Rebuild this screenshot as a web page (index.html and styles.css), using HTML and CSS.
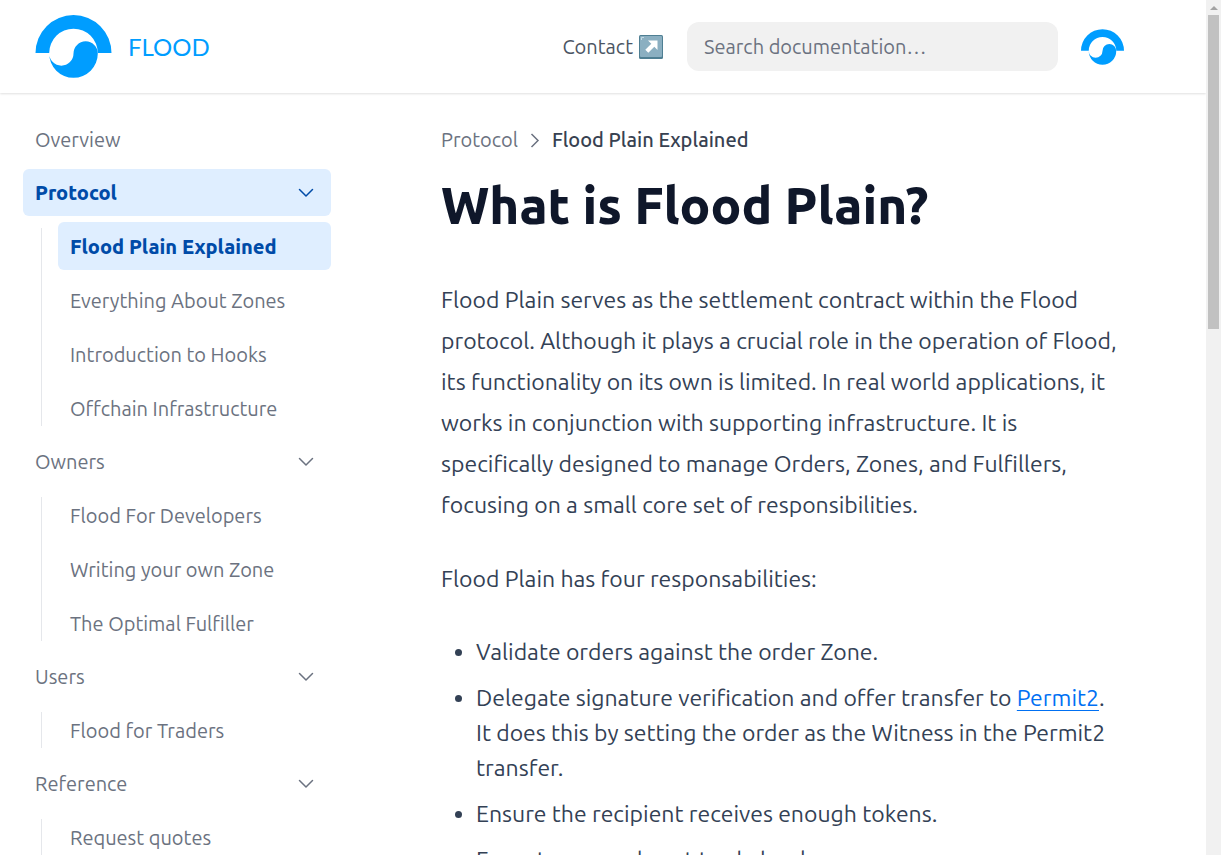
FILE: index.html
```html
<!DOCTYPE html>
<html lang="en">
<head>
<meta charset="utf-8">
<meta name="viewport" content="width=device-width, initial-scale=1">
<title>What is Flood Plain?</title>
<link rel="stylesheet" href="styles.css">
</head>
<body>
<svg class="defs" aria-hidden="true">
  <symbol id="logo" viewBox="0 0 76 63">
    <path d="M0 38A38 38 0 0 1 76 38H62.300A24.300 24.300 0 0 0 13.700 38Z"/>
    <path d="M13.700 38.500A12.150 12.150 0 0 0 38 38.500A12.150 12.150 0 0 1 62.300 38.500A24.300 24.300 0 0 1 13.700 38.500Z"/>
  </symbol>
  <symbol id="chevron" viewBox="0 0 16 16"><path d="M1.500 4.500 8 11 14.500 4.500" fill="none" stroke="currentColor" stroke-width="1.500" stroke-linecap="round" stroke-linejoin="round"/></symbol>
</svg>
<div class="page">
  <header class="topbar">
    <a class="brand" href="#"><svg class="brand-mark" aria-hidden="true"><use href="#logo"/></svg><span>FLOOD</span></a>
    <a class="contact" href="#">Contact
      <svg class="arrow-box" viewBox="0 0 24 24" role="img" aria-label="opens in new tab">
        <rect width="24" height="24" rx="1.500" fill="#4f7f93"/><rect x="1" y="1" width="22" height="21" rx="1" fill="#8bafc1"/>
        <path d="M2.500 5V2.500H5" fill="none" stroke="#c3dbe5"/>
        <path d="M9 5.500h9.500V15l-3.200-3.200-6 6-3-3 6-6Z" fill="#fff"/>
      </svg>
    </a>
    <input class="search" type="search" placeholder="Search documentation…" aria-label="Search documentation">
    <a class="project" href="#" aria-label="Flood project"><svg class="project-mark" aria-hidden="true"><use href="#logo"/></svg></a>
  </header>
  <div class="columns">
    <nav class="sidebar" aria-label="Documentation">
      <a class="item" href="#">Overview</a>
      <section class="group">
        <button class="item active" type="button">Protocol <svg class="chevron" aria-hidden="true"><use href="#chevron"/></svg></button>
        <ul class="children">
          <li><a class="child active" href="#">Flood Plain Explained</a></li>
          <li><a class="child" href="#">Everything About Zones</a></li>
          <li><a class="child" href="#">Introduction to Hooks</a></li>
          <li><a class="child" href="#">Offchain Infrastructure</a></li>
        </ul>
      </section>
      <section class="group">
        <button class="item" type="button">Owners <svg class="chevron" aria-hidden="true"><use href="#chevron"/></svg></button>
        <ul class="children">
          <li><a class="child" href="#">Flood For Developers</a></li>
          <li><a class="child" href="#">Writing your own Zone</a></li>
          <li><a class="child" href="#">The Optimal Fulfiller</a></li>
        </ul>
      </section>
      <section class="group">
        <button class="item" type="button">Users <svg class="chevron" aria-hidden="true"><use href="#chevron"/></svg></button>
        <ul class="children">
          <li><a class="child" href="#">Flood for Traders</a></li>
        </ul>
      </section>
      <section class="group">
        <button class="item" type="button">Reference <svg class="chevron" aria-hidden="true"><use href="#chevron"/></svg></button>
        <ul class="children">
          <li><a class="child" href="#">Request quotes</a></li>
        </ul>
      </section>
    </nav>
    <main class="article">
      <nav class="crumbs" aria-label="Breadcrumb">
        <span>Protocol</span>
        <svg class="crumb-arrow" viewBox="0 0 10 16" aria-hidden="true"><path d="M1.500 2 8 8.500 1.500 15" fill="none" stroke="currentColor" stroke-width="1.500"/></svg>
        <span class="current">Flood Plain Explained</span>
      </nav>
      <h1>What is Flood Plain?</h1>
      <p>Flood Plain serves as the settlement contract within the Flood<br> protocol. Although it plays a crucial role in the operation of Flood,<br> its functionality on its own is limited. In real world applications, it<br> works in conjunction with supporting infrastructure. It is<br> specifically designed to manage Orders, Zones, and Fulfillers,<br> focusing on a small core set of responsibilities.</p>
      <p>Flood Plain has four responsabilities:</p>
      <ul class="duties">
        <li>Validate orders against the order Zone.</li>
        <li>Delegate signature verification and offer transfer to <a href="#">Permit2</a>.<br> It does this by setting the order as the Witness in the Permit2<br> transfer.</li>
        <li>Ensure the recipient receives enough tokens.</li>
        <li>Execute pre and post trade hooks.</li>
      </ul>
    </main>
  </div>
</div>
<div class="scrollbar" aria-hidden="true"><span class="scroll-up"></span><span class="thumb"></span></div>
</body>
</html>
```
FILE: styles.css
```css
* { box-sizing: border-box; }
body {
  margin: 0;
  display: flex;
  height: 100vh;
  overflow: hidden;
  background: #fff;
  font-family: Ubuntu, "Noto Sans", sans-serif;
  font-size: 20px;
  color: #334155;
}
a { color: inherit; text-decoration: none; }
ul { margin: 0; padding: 0; }
.defs { display: none; }
.page { flex: 1; min-width: 0; }

.topbar {
  display: flex;
  align-items: center;
  height: 93px;
  padding: 0 82px 0 35px;
  box-shadow: 0 1px 2px rgba(0, 0, 0, 0.12);
}
.brand {
  display: flex;
  align-items: center;
  gap: 16px;
  margin-right: auto;
  color: #009dff;
  font-family: Lato, sans-serif;
  font-size: 24px;
}
.brand-mark { width: 77px; height: 63px; fill: #009dff; }
.contact { display: flex; align-items: center; gap: 6px; margin-right: 24px; color: #4b5563; }
.arrow-box { width: 24px; height: 24px; }
.search {
  width: 371px;
  height: 49px;
  margin-right: 23px;
  padding: 0 17px;
  border: 0;
  border-radius: 12px;
  background: #f1f1f1;
  font: inherit;
}
.search::placeholder { color: #6b7280; opacity: 1; }
.project { display: flex; }
.project-mark { width: 43px; height: 36px; fill: #009dff; }

.columns { display: flex; align-items: flex-start; }
.sidebar {
  display: flex;
  flex-direction: column;
  gap: 6px;
  width: 331px;
  padding: 23px 0 0 23px;
  color: #6b7280;
}
.item, .child {
  display: flex;
  align-items: center;
  justify-content: space-between;
  width: 100%;
  height: 47px;
  padding: 0 12px;
  border: 0;
  border-radius: 6px;
  background: none;
  color: inherit;
  font: inherit;
  text-align: left;
}
.item { padding-right: 17px; }
.child { height: 48px; }
.active { background: #dfeeff; color: #004ba8; font-weight: 800; }
.chevron { width: 16px; height: 16px; }
.children {
  position: relative;
  display: grid;
  gap: 6px;
  margin-top: 6px;
  padding-left: 35px;
  list-style: none;
}
.children::before {
  content: "";
  position: absolute;
  inset: 6px auto 6px 18px;
  width: 1px;
  background: #e5e7eb;
}

.article { flex: 1; min-width: 0; padding: 32px 75px 0 110px; }
.crumbs { display: flex; align-items: center; gap: 12px; line-height: 30px; color: #6b7280; }
.crumb-arrow { width: 10px; height: 16px; }
.current { color: #374151; font-weight: 500; }
h1 { margin: 18px 0 0; color: #0f172a; font-size: 51px; line-height: 64px; font-weight: 800; white-space: nowrap; }
p { margin: 33px 0 0; font-size: 23px; line-height: 41px; white-space: nowrap; }
h1 + p { margin-top: 42px; }
.duties { display: grid; gap: 11px; margin-top: 35px; padding-left: 35px; font-size: 23px; line-height: 35px; white-space: nowrap; }
.duties a { color: #0070f3; text-decoration: underline; text-decoration-thickness: 1px; text-underline-offset: 4px; }

.scrollbar {
  display: flex;
  flex-direction: column;
  align-items: center;
  width: 15px;
  padding-top: 6px;
  background: #f1f1f1;
}
.scroll-up { border: 4px solid transparent; border-top: 0; border-bottom-color: #a3a3a3; }
.thumb { width: 11px; height: 37%; margin-top: 5px; background: #c1c1c1; }
```
